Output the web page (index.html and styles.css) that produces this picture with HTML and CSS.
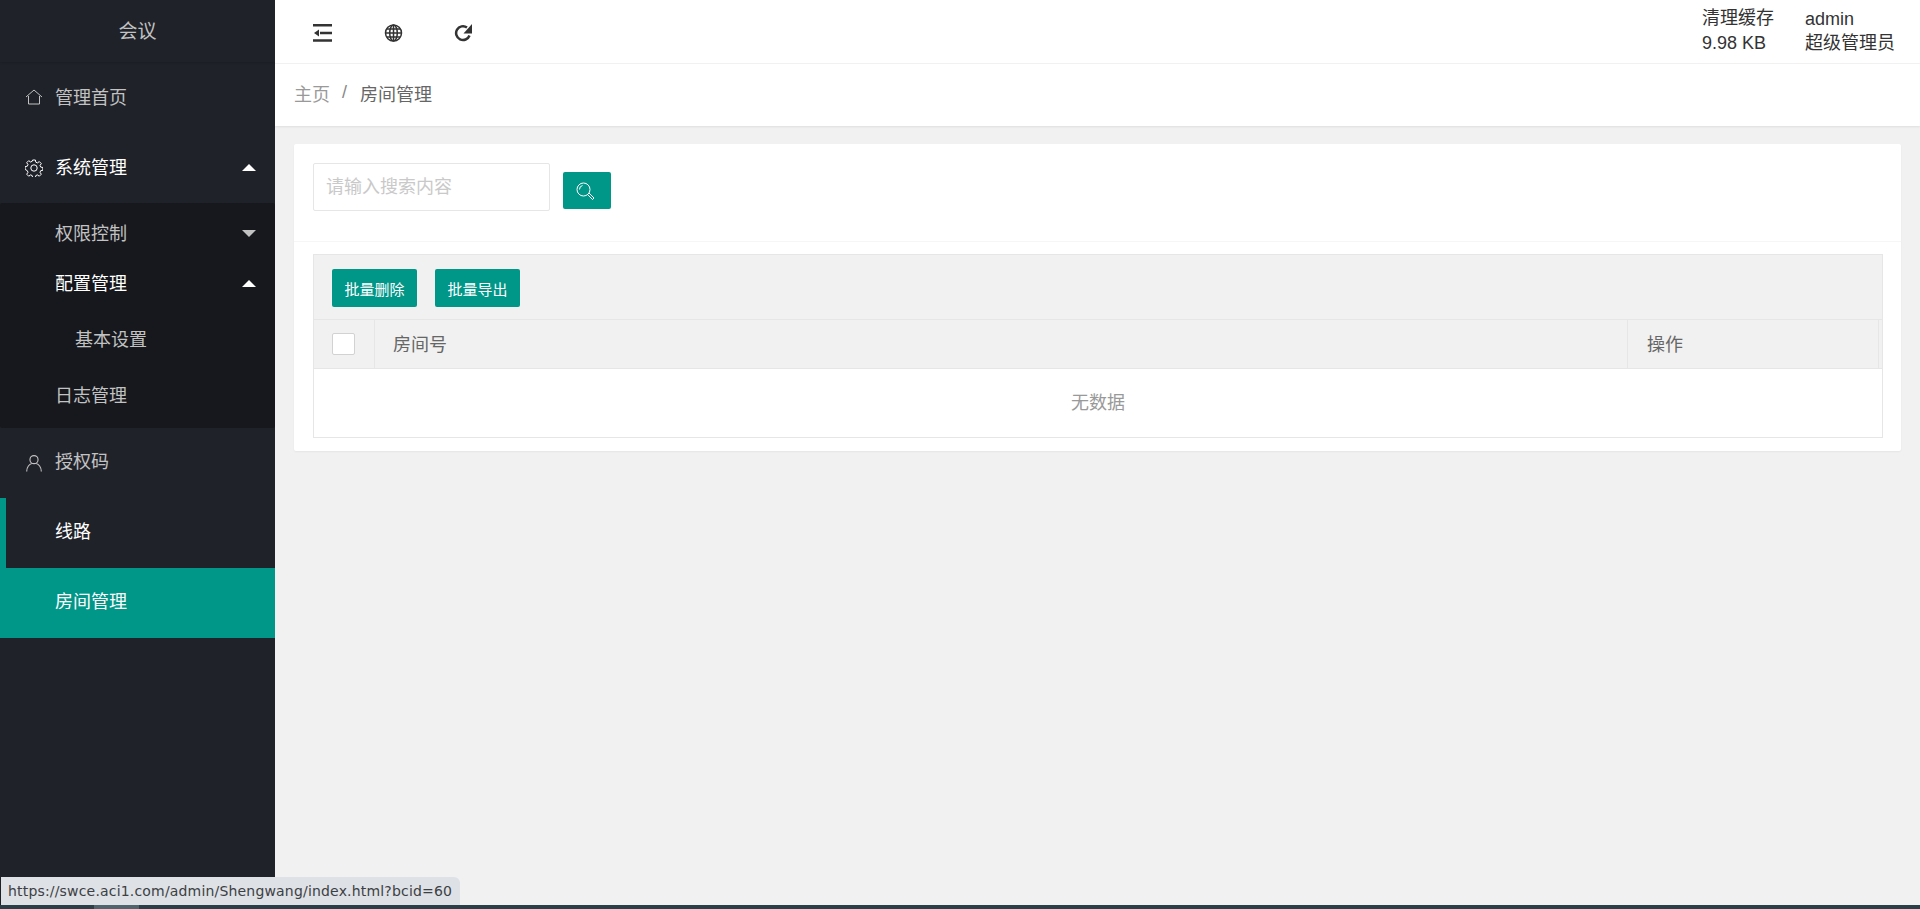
FILE: index.html
```html
<!DOCTYPE html>
<html lang="zh-CN">
<head>
  <meta charset="UTF-8">
  <meta name="viewport" content="width=device-width, initial-scale=1.0">
  <title>房间管理</title>
  <link rel="stylesheet" href="styles.css">
</head>
<body>
  <div class="app">
    <div class="side">
      <div class="logo">会议</div>
      <a class="nav-item nav-home">
        <svg class="nav-icon" viewBox="0 0 18 16"><path d="M1 8 9 1l8 7M3.5 7v8h11V7" fill="none" stroke="currentColor"/></svg>
        <span>管理首页</span>
      </a>
      <a class="nav-item nav-open">
        <svg class="nav-icon" viewBox="0 0 18 18"><circle cx="9" cy="9" r="3.2" fill="none" stroke="currentColor"/><path d="M7.6 1h2.8l.4 2.2 1.6.7 1.9-1.3 2 2-1.3 1.9.7 1.6 2.2.4v2.8l-2.2.4-.7 1.6 1.3 1.9-2 2-1.9-1.3-1.6.7-.4 2.2H7.6l-.4-2.2-1.6-.7-1.9 1.3-2-2 1.3-1.9-.7-1.6L.1 10.400V7.600l2.200-.4.7-1.600-1.300-1.900 2-2 1.900 1.300 1.600-.7z" fill="none" stroke="currentColor"/></svg>
        <span>系统管理</span>
        <i class="arrow arrow-up"></i>
      </a>
      <div class="sub">
        <a class="sub-item">
          <span>权限控制</span>
          <i class="arrow arrow-down"></i>
        </a>
        <a class="sub-item sub-open">
          <span>配置管理</span>
          <i class="arrow arrow-up"></i>
        </a>
        <a class="sub-item sub-child"><span>基本设置</span></a>
        <a class="sub-item sub-last"><span>日志管理</span></a>
      </div>
      <a class="nav-item nav-low">
        <svg class="nav-icon" viewBox="0 0 16 16"><circle cx="8" cy="5" r="3.600" fill="none" stroke="currentColor"/><path d="M1.500 15.500c0-4 2.500-6.500 4.500-7M14.500 15.500c0-4-2.500-6.500-4.500-7" fill="none" stroke="currentColor"/></svg>
        <span>授权码</span>
      </a>
      <a class="nav-item nav-low nav-line"><span>线路</span></a>
      <a class="nav-item nav-low nav-active"><span>房间管理</span></a>
    </div>

    <div class="main">
      <div class="header">
        <div class="tools">
          <svg class="tool" viewBox="0 0 19 18"><path d="M0 1.250h19M7 9h12M0 16.500h19" fill="none" stroke="#333" stroke-width="2.500"/><path d="M1 9l5-3.500v7z" fill="#333"/></svg>
          <svg class="tool" viewBox="-.5 0 19 18"><g fill="none" stroke="#333" stroke-width="1.500"><circle cx="9" cy="9" r="8"/><ellipse cx="9" cy="9" rx="3.800" ry="8"/><path d="M9 1v16M1 9h16M2.200 5h13.600M2.200 13h13.600"/></g></svg>
          <svg class="tool tool-last" viewBox="0 0 19 18"><path d="M15.500 11.500A6.900 6.900 0 1 1 13 3.500" fill="none" stroke="#333" stroke-width="2.500"/><path d="M18 0v9.500h-8.500z" fill="#333"/></svg>
        </div>
        <div class="head-info">
          <div class="cache">清理缓存<br>9.98 KB</div>
          <div class="user"><div class="user-name">admin</div>超级管理员</div>
        </div>
      </div>
      <div class="crumb">
        <span class="crumb-home">主页</span>
        <span class="crumb-sep">/</span>
        <span class="crumb-now">房间管理</span>
      </div>

      <div class="content">
        <div class="card">
          <div class="search">
            <input class="search-input" type="text" placeholder="请输入搜索内容">
            <button class="search-btn">
              <svg viewBox="0 0 18 18" width="18" height="18"><circle cx="7.500" cy="7.500" r="6.500" fill="none" stroke="#fff"/><path d="M3.500 7.500a4 4 0 0 1 3-4" fill="none" stroke="#fff"/><path d="M12 12l1-1 5 5-1.500 1.500-5-5z" fill="none" stroke="#fff"/></svg>
            </button>
          </div>
          <div class="table-wrap">
            <div class="toolbar">
              <button class="btn">批量删除</button>
              <button class="btn">批量导出</button>
            </div>
            <div class="thead">
              <div class="th th-check"><span class="check"></span></div>
              <div class="th th-name"><span>房间号</span></div>
              <div class="th th-op"><span>操作</span></div>
              <div class="th th-gap"></div>
            </div>
            <div class="empty">无数据</div>
          </div>
        </div>
      </div>
    </div>
  </div>
  <div class="taskbar"><span class="task"></span></div>
  <div class="status">https://swce.aci1.com/admin/Shengwang/index.html?bcid=60</div>
</body>
</html>
```

FILE: styles.css
```css
* {
  box-sizing: border-box;
}
body {
  margin: 0;
  height: 909px;
  overflow: hidden;
  background: #f1f1f1;
  font-family: "Liberation Sans", "Noto Sans CJK SC", sans-serif;
  font-size: 18px;
  color: #333;
}
.app {
  display: flex;
  height: 905px;
}

/* sidebar */
.side {
  width: 275px;
  flex-shrink: 0;
  background: #20222a;
  color: #c2c2c2;
}
.logo {
  height: 62px;
  line-height: 63px;
  text-align: center;
  font-size: 19px;
  box-shadow: 0 1px 2px rgba(0, 0, 0, 0.15);
}
.nav-item {
  display: flex;
  align-items: center;
  height: 70px;
  padding-left: 25px;
  padding-right: 19px;
}
.nav-item span {
  flex: 1;
  padding-bottom: 4px;
}
.nav-home span {
  padding-bottom: 2px;
}
.nav-low span {
  padding-bottom: 6px;
}
.nav-icon {
  width: 18px;
  height: 18px;
  margin-right: 12px;
  flex-shrink: 0;
}
.nav-open {
  height: 71px;
  color: #fff;
}
.nav-line {
  padding-left: 49px;
  border-left: 6px solid #009688;
  color: #fff;
}
.nav-active {
  padding-left: 55px;
  background: #009688;
  color: #fff;
}
.arrow {
  width: 0;
  height: 0;
  border-left: 7px solid transparent;
  border-right: 7px solid transparent;
}
.arrow-up {
  border-bottom: 7px solid #fff;
}
.arrow-down {
  border-top: 7px solid #c2c2c2;
}
.sub {
  height: 225px;
  padding-top: 5px;
  background: #16181d;
  border-radius: 2px;
}
.sub-item {
  display: flex;
  align-items: center;
  justify-content: space-between;
  height: 50px;
  padding-left: 55px;
  padding-right: 19px;
}
.sub-item span {
  padding-bottom: 2px;
}
.sub-open {
  color: #fff;
}
.sub-child {
  height: 63px;
  padding-left: 75px;
}
.sub-child span {
  padding-bottom: 4px;
}
.sub-last {
  height: 47px;
  padding-left: 55px;
}

/* top */
.main {
  flex: 1;
  display: flex;
  flex-direction: column;
}
.header {
  display: flex;
  justify-content: space-between;
  height: 64px;
  background: #fff;
  border-bottom: 1px solid #f2f2f2;
}
.tools {
  display: flex;
  align-items: center;
  gap: 52px;
  padding: 2px 0 0 38px;
}
.tool {
  width: 19px;
  height: 18px;
}
.tool-last {
  margin-left: -1px;
}
.head-info {
  display: flex;
  gap: 31px;
  padding: 6px 25px 0 0;
  line-height: 25px;
  color: #333;
}
.user-name {
  height: 25px;
  line-height: 27px;
}
.crumb {
  display: flex;
  align-items: center;
  height: 62px;
  padding: 0 0 5px 19px;
  background: #fff;
  box-shadow: 0 1px 2px rgba(0, 0, 0, 0.08);
}
.crumb-home {
  color: #999;
}
.crumb-sep {
  margin: 0 13px 0 12px;
  color: #888;
}
.crumb-now {
  color: #666;
}

/* card */
.content {
  padding: 18px 19px;
}
.card {
  height: 307px;
  background: #fff;
  border-radius: 2px;
  box-shadow: 0 1px 2px rgba(0, 0, 0, 0.05);
}
.search {
  display: flex;
  gap: 13px;
  height: 98px;
  padding: 19px 19px 0;
  border-bottom: 1px solid #f6f6f6;
}
.search-input {
  width: 237px;
  height: 48px;
  padding: 0 12px;
  border: 1px solid #e6e6e6;
  border-radius: 2px;
  font-family: inherit;
  font-size: 18px;
}
.search-input::placeholder {
  color: #c9c9c9;
}
.search-btn {
  display: flex;
  align-items: center;
  width: 48px;
  height: 37px;
  margin-top: 9px;
  padding: 0 0 0 13px;
  border: none;
  border-radius: 2px;
  background: #009688;
}
.table-wrap {
  margin: 12px 18px 0 19px;
  height: 184px;
  border: 1px solid #e6e6e6;
}
.toolbar {
  display: flex;
  gap: 18px;
  height: 65px;
  padding: 14px 18px 0;
  background: #f1f1f1;
  border-bottom: 1px solid #e6e6e6;
}
.btn {
  width: 85px;
  height: 38px;
  padding: 0;
  border: none;
  border-radius: 2px;
  background: #009688;
  color: #fff;
  font-family: inherit;
  font-size: 15px;
}
.thead {
  display: flex;
  height: 49px;
  background: #f1f1f1;
  border-bottom: 1px solid #e6e6e6;
  color: #666;
}
.th {
  display: flex;
  align-items: center;
  border-right: 1px solid #e6e6e6;
}
.th span {
  padding-bottom: 2px;
}
.th-check {
  width: 61px;
  padding-left: 18px;
}
.check {
  width: 23px;
  height: 22px;
  background: #fff;
  border: 1px solid #d2d2d2;
  border-radius: 2px;
}
.th-name {
  flex: 1;
  padding-left: 18px;
}
.th-op {
  width: 251px;
  padding-left: 19px;
}
.th-gap {
  width: 3px;
  border-right: none;
}
.empty {
  height: 68px;
  line-height: 68px;
  text-align: center;
  color: #999;
}

/* browser bits */
.taskbar {
  height: 4px;
  background: #2a3f47;
}
.task {
  display: block;
  width: 45px;
  height: 4px;
  margin-left: 94px;
  background: #4f646c;
}
.status {
  position: absolute;
  left: 1px;
  top: 877px;
  width: 459px;
  height: 28px;
  padding-left: 7px;
  line-height: 28px;
  background: #dee1e6;
  border-radius: 0 6px 0 0;
  color: #3c4043;
  font-family: "DejaVu Sans", sans-serif;
  font-size: 14px;
  letter-spacing: 0.18px;
  white-space: nowrap;
}
```
